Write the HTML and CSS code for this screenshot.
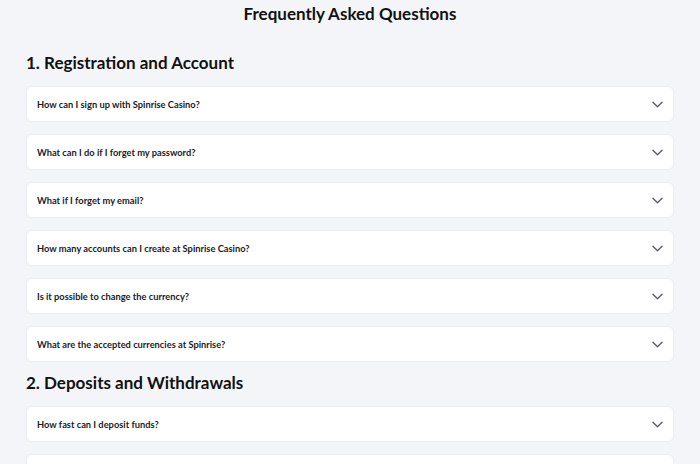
FILE: index.html
```html
<!DOCTYPE html>
<html lang="en">
<head>
<meta charset="utf-8">
<title>FAQ</title>
<link rel="stylesheet" href="styles.css">
</head>
<body>
<main class="faq">
  <h1 class="faq-title">Frequently Asked Questions</h1>

  <section class="faq-section">
    <h2 class="section-title">1. Registration and Account</h2>
    <div class="items">
      <div class="item"><span class="q">How can I sign up with Spinrise Casino?</span><svg class="chev" viewBox="0 0 12 7"><path d="M1 1l5 5 5-5"/></svg></div>
      <div class="item"><span class="q">What can I do if I forget my password?</span><svg class="chev" viewBox="0 0 12 7"><path d="M1 1l5 5 5-5"/></svg></div>
      <div class="item"><span class="q">What if I forget my email?</span><svg class="chev" viewBox="0 0 12 7"><path d="M1 1l5 5 5-5"/></svg></div>
      <div class="item"><span class="q">How many accounts can I create at Spinrise Casino?</span><svg class="chev" viewBox="0 0 12 7"><path d="M1 1l5 5 5-5"/></svg></div>
      <div class="item"><span class="q">Is it possible to change the currency?</span><svg class="chev" viewBox="0 0 12 7"><path d="M1 1l5 5 5-5"/></svg></div>
      <div class="item"><span class="q">What are the accepted currencies at Spinrise?</span><svg class="chev" viewBox="0 0 12 7"><path d="M1 1l5 5 5-5"/></svg></div>
    </div>
  </section>

  <section class="faq-section">
    <h2 class="section-title">2. Deposits and Withdrawals</h2>
    <div class="items">
      <div class="item"><span class="q">How fast can I deposit funds?</span><svg class="chev" viewBox="0 0 12 7"><path d="M1 1l5 5 5-5"/></svg></div>
      <div class="item item-peek"></div>
    </div>
  </section>
</main>
</body>
</html>
```

FILE: styles.css
```css
html, body {
  margin: 0;
  padding: 0;
  background: #f4f5f8;
  font-family: "Lato", "Noto Sans", sans-serif;
  color: #121212;
  overflow: hidden;
}

.faq {
  display: flex;
  flex-direction: column;
  padding: 0 26px;
}

.faq-title {
  margin: 0;
  font-size: 17px;
  line-height: 28px;
  font-weight: 700;
  text-align: center;
  color: #111111;
}

.faq-section {
  display: flex;
  flex-direction: column;
  margin-top: 9px;
}

.faq-section:first-of-type {
  margin-top: 23px;
}

.section-title {
  margin: 0 0 11px;
  font-size: 17px;
  line-height: 24px;
  font-weight: 700;
  color: #111111;
}

.items {
  display: flex;
  flex-direction: column;
  gap: 12px;
}

.item {
  box-sizing: border-box;
  height: 36px;
  display: flex;
  align-items: center;
  justify-content: space-between;
  padding: 0 10px;
  background: #ffffff;
  border: 1px solid #e9ecf1;
  border-radius: 6px;
}

.q {
  font-size: 9.3px;
  font-weight: 700;
  color: #1b1b1f;
}

.chev {
  width: 11px;
  height: 7px;
  fill: none;
  stroke: #545a6b;
  stroke-width: 1.4;
  stroke-linecap: round;
  stroke-linejoin: round;
}
```
